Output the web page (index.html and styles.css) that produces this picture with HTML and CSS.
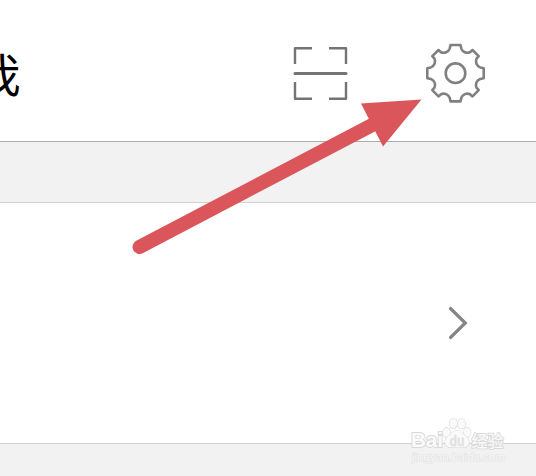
FILE: index.html
```
<!DOCTYPE html>
<html lang="zh-CN">
<head>
<meta charset="utf-8">
<title>我</title>
<link rel="stylesheet" href="styles.css">
</head>
<body>
<main class="screen">
  <header class="topbar">
    <h1 class="title">我</h1>
    <div class="actions">
      <svg class="scan" viewBox="0 0 56 56">
        <path d="M2 18V2.2H19M36 2.2H53V18M2 36V52.8H19M36 52.8H53V36"/>
        <path class="beam" d="M2 27.5H53"/>
      </svg>
      <svg class="gear" viewBox="-31.5 -30.2 62 62">
        <path d="M-5-28.2H5L5.8-24.6A6.5 6.5 0 0 0 14.5-21L17-23.2L23.2-17L21-14.5A6.5 6.5 0 0 0 24.6-5.8L28.2-5V5L24.6 5.8A6.5 6.5 0 0 0 21 14.5L23.2 17L17 23.2L14.5 21A6.5 6.5 0 0 0 5.8 24.6L5 28.2H-5L-5.8 24.6A6.5 6.5 0 0 0-14.5 21L-17 23.2L-23.2 17L-21 14.5A6.5 6.5 0 0 0-24.6 5.8L-28.2 5V-5L-24.6-5.8A6.5 6.5 0 0 0-21-14.5L-23.2-17L-17-23.2L-14.5-21A6.5 6.5 0 0 0-5.8-24.6Z"/>
        <circle r="9.8"/>
      </svg>
    </div>
  </header>
  <div class="gap"></div>
  <section class="row">
    <svg class="chevron" viewBox="0 0 20 34"><path d="M2.5 2.5L17.3 17L2.5 31.5"/></svg>
  </section>
  <footer class="bottom"></footer>
  <svg class="arrow" viewBox="0 0 536 476">
    <path class="shaft" d="M139.5 247L376 123"/>
    <path class="head" d="M361 103.5L421.5 99.5L383 146.5Z"/>
  </svg>
  <svg class="watermark" viewBox="0 0 104 52">
    <g class="brand">
      <text x="0" y="34" textLength="32" lengthAdjust="spacingAndGlyphs">Bai</text>
      <ellipse cx="35.5" cy="19.5" rx="3.6" ry="4.8"/>
      <ellipse cx="42.4" cy="10.5" rx="3.7" ry="5"/>
      <ellipse cx="50.6" cy="10.8" rx="3.7" ry="5"/>
      <ellipse cx="56.3" cy="19.3" rx="3.5" ry="4.6"/>
      <path d="M46 17.5C50 17.5 52 21 55.5 24C60 28 58 34.5 52 34.2C48 33.5 44 33.5 40 34.2C34 34.5 32 28 36.5 24C40 21 42 17.5 46 17.5Z"/>
      <text class="du" x="38.5" y="32.5" textLength="15" lengthAdjust="spacingAndGlyphs">du</text>
      <text class="cn" x="60.5" y="33.5" textLength="32" lengthAdjust="spacingAndGlyphs">经验</text>
    </g>
    <text class="url" x="1" y="47.5" textLength="93" lengthAdjust="spacingAndGlyphs">jingyan.baidu.com</text>
  </svg>
</main>
</body>
</html>
```
FILE: styles.css
```
* { box-sizing: border-box; }
body { margin: 0; font-family: "Liberation Sans", "Noto Sans CJK SC", sans-serif; }
.screen {
  position: relative;
  width: 536px;
  height: 476px;
  overflow: hidden;
  background: #fff;
}
.topbar {
  display: flex;
  justify-content: space-between;
  align-items: center;
  height: 142px;
  padding: 6px 50px 0 0;
  border-bottom: 1px solid #acacac;
}
.title {
  margin: 0 0 4px -25.5px;
  font: 400 46px/60px "Noto Sans CJK SC", sans-serif;
  color: #000;
}
.actions { display: flex; align-items: center; gap: 75px; }
svg { display: block; fill: none; }
.scan { width: 56px; height: 56px; stroke: #747474; stroke-width: 2.4; stroke-linejoin: round; }
.beam { stroke-width: 3; stroke-linecap: round; }
.gear { width: 62px; height: 62px; stroke: #808080; stroke-width: 2.6; stroke-linejoin: round; }
.gap { height: 61px; background: #f2f2f2; border-bottom: 1px solid #d2d2d2; }
.row {
  display: flex;
  align-items: center;
  justify-content: flex-end;
  height: 241px;
  padding-right: 68px;
  border-bottom: 1px solid #d2d2d2;
}
.chevron { width: 20px; height: 34px; stroke: #868686; stroke-width: 3.2; stroke-linecap: round; }
.bottom { height: 32px; background: #f2f2f2; }
.arrow { position: absolute; inset: 0; width: 536px; height: 476px; }
.shaft { stroke: #db565b; stroke-width: 14; stroke-linecap: round; }
.head { fill: #db565b; }
.watermark { position: absolute; left: 411px; top: 413px; width: 104px; height: 52px; }
.brand { fill: #fafafa; stroke: #d9d9d9; stroke-width: 1.2; paint-order: stroke; }
.brand text { font: 700 20px "Liberation Sans", sans-serif; stroke-width: 1.8; }
.brand .du { font-size: 14px; fill: #e2e2e2; stroke: #d6d6d6; stroke-width: 0.3; }
.brand .cn { font: 500 16px "Noto Sans CJK SC", sans-serif; }
.url { fill: #f8f8f8; stroke: #e0e0e0; stroke-width: 1; paint-order: stroke; font-size: 11px; }
```
